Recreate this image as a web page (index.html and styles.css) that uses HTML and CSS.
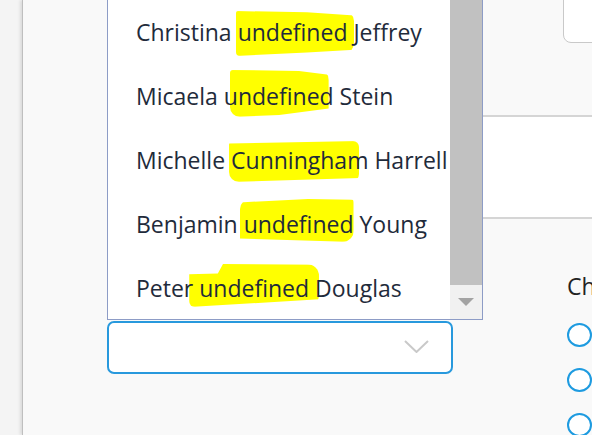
FILE: index.html
```html
<!DOCTYPE html>
<html>
<head>
<meta charset="utf-8">
<link rel="stylesheet" href="styles.css">
</head>
<body>
<div class="page">
  <div class="strip"></div>
  <div class="panel">
    <div class="row-top">
      <div class="top-input"></div>
    </div>
    <div class="divider"></div>
    <div class="row-band"></div>
    <div class="divider"></div>
    <div class="row-form">
      <div class="select-wrap">
        <div class="listbox">
          <ul class="options">
            <li class="opt">Christina <span class="hl hl-1">undefined</span> Jeffrey</li>
            <li class="opt">Micaela <span class="hl hl-2">undefined</span> Stein</li>
            <li class="opt">Michelle <span class="hl hl-3">Cunningham</span> Harrell</li>
            <li class="opt">Benjamin <span class="hl hl-4">undefined</span> Young</li>
            <li class="opt">Peter <span class="hl hl-5">undefined</span> Douglas</li>
          </ul>
          <div class="scrollbar">
            <div class="thumb"></div>
            <div class="arrow-btn"><span class="tri"></span></div>
          </div>
        </div>
        <div class="select">
          <svg class="chev" width="25" height="13" viewBox="0 0 25 13"><polyline points="1,1 12.5,12 24,1" fill="none" stroke="#c9c9c9" stroke-width="2"/></svg>
        </div>
      </div>
      <div class="choice">
        <div class="choice-label">Choose one</div>
        <div class="radios">
          <span class="radio"></span>
          <span class="radio"></span>
          <span class="radio"></span>
        </div>
      </div>
    </div>
  </div>
</div>
</body>
</html>
```
FILE: styles.css
```css
html, body {
  margin: 0;
  padding: 0;
  width: 592px;
  height: 435px;
  overflow: hidden;
  background: #f4f4f4;
  font-family: "Open Sans", "Liberation Sans", sans-serif;
}
.page {
  display: flex;
  width: 592px;
  height: 435px;
  overflow: hidden;
}
.strip {
  width: 22px;
  flex: none;
  background: #f4f4f4;
}
.panel {
  flex: 1;
  min-width: 0;
  background: #f9f9f9;
  border-left: 1px solid #bfbfbf;
  box-shadow: -2px 0 3px rgba(0,0,0,0.10);
  padding-left: 84px;
  display: flex;
  flex-direction: column;
  overflow: hidden;
}
.row-top {
  height: 115px;
  flex: none;
  display: flex;
  align-items: flex-start;
}
.top-input {
  margin-left: 456px;
  margin-top: -20px;
  width: 80px;
  height: 61px;
  flex: none;
  background: #fff;
  border: 1px solid #c9c9c9;
  border-radius: 8px;
}
.divider {
  height: 2px;
  flex: none;
  background: #d5d5d5;
}
.row-band {
  height: 100px;
  flex: none;
  background: #fff;
}
.row-form {
  display: flex;
  align-items: flex-start;
}
.select-wrap {
  position: relative;
  margin-top: 102px;
  width: 346px;
  flex: none;
}
.select {
  box-sizing: border-box;
  height: 53px;
  border: 2px solid #2899dd;
  border-radius: 7px;
  background: #fff;
  display: flex;
  align-items: center;
  justify-content: flex-end;
  padding-right: 22px;
}
.chev { display: block; margin-top: -2px; }

.listbox {
  position: absolute;
  left: 0;
  bottom: 100%;
  margin-bottom: 1px;
  width: 376px;
  box-sizing: border-box;
  border: 1px solid #8d9cc6;
  border-top: none;
  background: #fff;
  display: flex;
  z-index: 5;
}
.options {
  list-style: none;
  margin: 0;
  padding: 0;
  flex: 1;
}
.opt {
  height: 64px;
  line-height: 66px;
  padding-left: 28px;
  font-size: 23px;
  color: #1f2b3b;
  white-space: nowrap;
  position: relative;
  z-index: 0;
}
.hl {
  position: relative;
}
.hl::before {
  content: "";
  position: absolute;
  background: #ffff00;
  z-index: -1;
}
.hl-1::before {
  left: -2px; right: -7px; top: -5px; bottom: -8px;
  border-radius: 2px 10px 14px 4px;
  clip-path: polygon(0 0, 60% 3%, 100% 10%, 100% 86%, 60% 92%, 0 100%);
}
.hl-2::before {
  left: 6px; right: 5px; top: -10px; bottom: -5px;
  border-radius: 3px 10px 6px 10px;
  clip-path: polygon(0 0, 70% 2%, 100% 10%, 100% 82%, 50% 96%, 0 100%);
}
.hl-3::before {
  left: -2px; right: 9px; top: -3px; bottom: -6px;
  border-radius: 4px 6px 8px 10px;
  clip-path: polygon(0 6%, 100% 0, 100% 90%, 0 100%);
}
.hl-4::before {
  left: -4px; right: 0px; top: -9px; bottom: -2px;
  border-radius: 10px 4px 12px 4px;
  clip-path: polygon(0 8%, 60% 0, 100% 2%, 100% 100%, 0 92%);
}
.hl-5::before {
  left: -10px; right: -10px; top: -8px; bottom: -3px;
  border-radius: 4px 12px 12px 6px;
  clip-path: polygon(0 24%, 22% 22%, 26% 0, 100% 2%, 100% 82%, 0 100%);
}

.scrollbar {
  width: 32px;
  flex: none;
  display: flex;
  flex-direction: column;
  background: #f1f1f1;
}
.thumb {
  flex: 1;
  background: #c1c1c1;
}
.arrow-btn {
  height: 34px;
  flex: none;
  display: flex;
  align-items: center;
  justify-content: center;
}
.tri {
  width: 0;
  height: 0;
  border-left: 8px solid transparent;
  border-right: 8px solid transparent;
  border-top: 8px solid #a3a3a3;
}

.choice {
  margin-left: 114px;
  margin-top: 52px;
  flex: none;
}
.choice-label {
  font-size: 23px;
  line-height: 30px;
  color: #222;
  white-space: nowrap;
}
.radios {
  margin-top: 22px;
  display: flex;
  flex-direction: column;
  gap: 21px;
}
.radio {
  display: block;
  box-sizing: border-box;
  width: 25px;
  height: 24px;
  border: 2px solid #1e9be0;
  border-radius: 50%;
  background: #fff;
}
```
